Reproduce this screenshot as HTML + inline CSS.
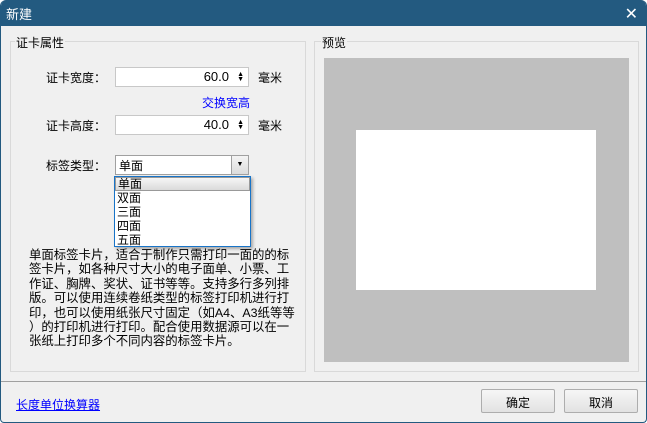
<!DOCTYPE html>
<html><head><meta charset="utf-8"><style>
*{margin:0;padding:0;box-sizing:border-box}
body{width:647px;height:423px;overflow:hidden;background:#fff;font-family:"Liberation Sans","Noto Sans CJK SC","WenQuanYi Zen Hei",sans-serif;font-size:12px;color:#000}
.win{position:absolute;left:0;top:0;width:647px;height:423px;background:#f0f0f0;border:1px solid #235a80;border-top:none;border-radius:6px 6px 4px 4px;overflow:hidden}
.title{position:absolute;left:0;top:0;width:647px;height:26px;background:#235a80;color:#fff;font-size:13px;padding:4px 0 0 5px}
.x{position:absolute;right:10px;top:4px;font-size:16px;color:#fff}
.a{position:absolute;white-space:nowrap}
.gb{position:absolute;border:1px solid #d9d9d9}
.gl{position:absolute;background:#f0f0f0;padding:0 1px;font-size:12px}
.inp{position:absolute;background:#fff;border:1px solid #c8c8c8;height:20px;font-size:13px;text-align:right;padding:1px 19px 0 0}
.spin{position:absolute;right:4px;top:4px;font-size:7px;line-height:5px;text-align:center}
.btn{position:absolute;width:74px;height:24px;border:1px solid #adadad;border-radius:2px;background:linear-gradient(#f6f6f6,#e2e2e2);text-align:center;font-size:12px;padding-top:4px}
.item{height:14px;line-height:14px;padding-left:2px;font-size:12px}
</style></head><body>
<div class="win">
<div class="title">新建<span class="x">✕</span></div>

<div class="gb" style="left:9px;top:41px;width:296px;height:331px"></div>
<div class="gl" style="left:14px;top:34px">证卡属性</div>
<div class="gb" style="left:313px;top:41px;width:325px;height:331px"></div>
<div class="gl" style="left:320px;top:34px">预览</div>
<div class="a" style="left:323px;top:58px;width:305px;height:304px;background:#bfbfbf"></div>
<div class="a" style="left:355px;top:130px;width:240px;height:160px;background:#fff"></div>

<div class="a" style="left:45px;top:69px">证卡宽度：</div>
<div class="inp" style="left:114px;top:67px;width:134px">60.0<div class="spin">▲<br>▼</div></div>
<div class="a" style="left:257px;top:69px">毫米</div>
<div class="a" style="left:201px;top:94px;color:#0000ff">交换宽高</div>
<div class="a" style="left:45px;top:117px">证卡高度：</div>
<div class="inp" style="left:114px;top:115px;width:134px">40.0<div class="spin">▲<br>▼</div></div>
<div class="a" style="left:257px;top:117px">毫米</div>
<div class="a" style="left:45px;top:157px">标签类型：</div>
<div class="a" style="left:114px;top:155px;width:134px;height:20px;background:#fff;border:1px solid #a0a0a0;padding:1px 0 0 3px">单面
<div style="position:absolute;right:0;top:0;width:17px;height:18px;border-left:1px solid #a0a0a0;background:linear-gradient(#f4f4f4,#dcdcdc);font-size:7px;text-align:center;line-height:18px">▼</div></div>
<div class="a" style="left:113px;top:176px;width:137px;height:71px;background:#fff;border:1px solid #1874c8;box-shadow:2px 2px 3px rgba(0,0,0,.3)">
<div class="item" style="background:linear-gradient(#f6f6f6,#dadada);border:1px solid #999;line-height:12px">单面</div>
<div class="item">双面</div><div class="item">三面</div><div class="item">四面</div><div class="item">五面</div>
</div>
<div class="a" style="left:28px;top:248px;width:268px;white-space:normal;font-size:12.4px;line-height:14.4px">单面标签卡片，适合于制作只需打印一面的的标<br>签卡片，如各种尺寸大小的电子面单、小票、工<br>作证、胸牌、奖状、证书等等。支持多行多列排<br>版。可以使用连续卷纸类型的标签打印机进行打<br>印，也可以使用纸张尺寸固定（如A4、A3纸等等<br>）的打印机进行打印。配合使用数据源可以在一<br>张纸上打印多个不同内容的标签卡片。</div>

<div class="a" style="left:0;top:381px;width:647px;height:1px;background:#a0a0a0"></div>
<div class="a" style="left:15px;top:396px;color:#0000ff;text-decoration:underline">长度单位换算器</div>
<div class="btn" style="left:480px;top:389px">确定</div>
<div class="btn" style="left:563px;top:389px">取消</div>
</div>
</body></html>
